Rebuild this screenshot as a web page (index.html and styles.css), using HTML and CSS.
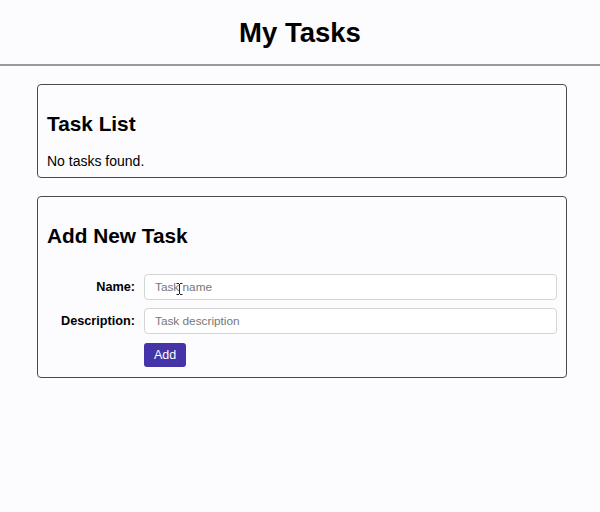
FILE: index.html
```html
<!DOCTYPE html>
<html lang="en">
<head>
<meta charset="utf-8">
<title>My Tasks</title>
<link rel="stylesheet" href="styles.css">
</head>
<body>
<header class="top">
  <h1 class="title">My Tasks</h1>
</header>
<main class="main">
  <section class="card">
    <h2 class="card-title">Task List</h2>
    <p class="empty">No tasks found.</p>
  </section>
  <section class="card">
    <h2 class="card-title">Add New Task</h2>
    <form class="form">
      <label class="label" for="name">Name:</label>
      <div class="field">
        <input class="input" id="name" type="text" placeholder="Task name">
        <svg class="cursor" width="7" height="12" viewBox="0 0 7 12"><path d="M0.5 0.5h2.5M4 0.5h2.5M3.5 1v10M0.5 11.5h2.5M4 11.5h2.5" stroke="#222" stroke-width="1" fill="none"/></svg>
      </div>
      <label class="label" for="desc">Description:</label>
      <input class="input" id="desc" type="text" placeholder="Task description">
      <span></span>
      <div><button class="btn" type="button">Add</button></div>
    </form>
  </section>
</main>
</body>
</html>
```
FILE: styles.css
```css
* { box-sizing: border-box; }
html, body { margin: 0; padding: 0; }
body {
  background: #fcfbfe;
  font-family: "Liberation Sans", Arial, sans-serif;
  color: #000;
  height: 512px;
  overflow: hidden;
}
.top {
  height: 66px;
  padding-top: 17px;
  border-bottom: 2px solid #9a9a9a;
}
.title {
  margin: 0;
  text-align: center;
  font-size: 27.5px;
  line-height: 32px;
  font-weight: bold;
}
.main {
  padding: 0 33px 0 37px;
}
.card {
  margin-top: 18px;
  border: 1px solid #4a4a4a;
  border-radius: 4px;
  padding: 0 9px 8px;
}
.card-title {
  margin: 27px 0 0;
  font-size: 20.8px;
  line-height: 24px;
  font-weight: bold;
}
.empty {
  margin: 17px 0 0;
  font-size: 14px;
  line-height: 16px;
}
.form {
  margin-top: 26px;
  display: grid;
  grid-template-columns: 88px 1fr;
  column-gap: 9px;
  row-gap: 8px;
  align-items: center;
  padding-bottom: 2px;
}
.label {
  text-align: right;
  font-weight: bold;
  font-size: 12.7px;
}
.field { position: relative; }
.input {
  display: block;
  width: 100%;
  height: 26px;
  border: 1px solid #d4d4d4;
  border-radius: 4px;
  background: #fff;
  padding: 0 10px;
  font-family: "Liberation Sans", Arial, sans-serif;
  font-size: 11.8px;
  color: #222;
  outline: none;
}
.input::placeholder { color: #767676; }
.btn {
  margin-top: 1px;
  display: block;
  width: 42px;
  height: 24px;
  border: none;
  border-radius: 3px;
  background: #4434a8;
  color: #fff;
  font-family: "Liberation Sans", Arial, sans-serif;
  font-size: 12.5px;
  padding: 0;
}
.cursor {
  position: absolute;
  left: 32px;
  top: 9px;
}
```
